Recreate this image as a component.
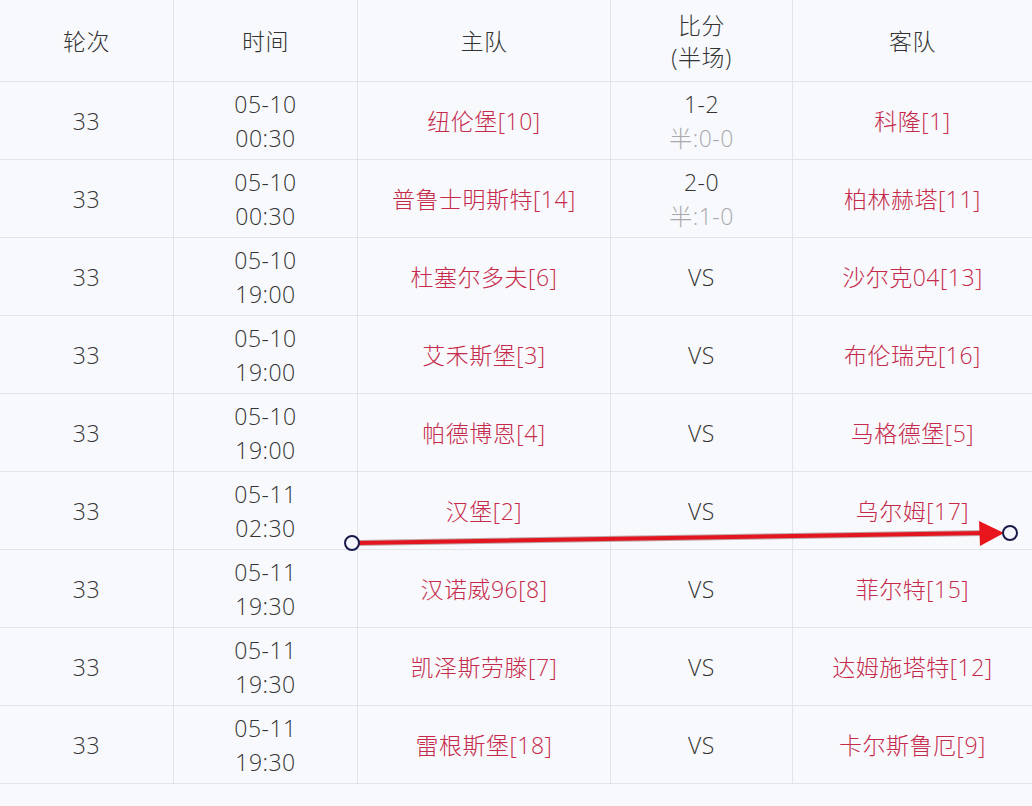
import React from 'react';

const rows = [
  { date: '05-10', time: '00:30', home: '纽伦堡[10]', score: '1-2', half: '半:0-0', away: '科隆[1]' },
  { date: '05-10', time: '00:30', home: '普鲁士明斯特[14]', score: '2-0', half: '半:1-0', away: '柏林赫塔[11]' },
  { date: '05-10', time: '19:00', home: '杜塞尔多夫[6]', score: 'VS', away: '沙尔克04[13]' },
  { date: '05-10', time: '19:00', home: '艾禾斯堡[3]', score: 'VS', away: '布伦瑞克[16]' },
  { date: '05-10', time: '19:00', home: '帕德博恩[4]', score: 'VS', away: '马格德堡[5]' },
  { date: '05-11', time: '02:30', home: '汉堡[2]', score: 'VS', away: '乌尔姆[17]' },
  { date: '05-11', time: '19:30', home: '汉诺威96[8]', score: 'VS', away: '菲尔特[15]' },
  { date: '05-11', time: '19:30', home: '凯泽斯劳滕[7]', score: 'VS', away: '达姆施塔特[12]' },
  { date: '05-11', time: '19:30', home: '雷根斯堡[18]', score: 'VS', away: '卡尔斯鲁厄[9]' },
];

const cols = 'grid grid-cols-[174px_184px_253px_182px_239px]';
const cell = 'flex flex-col items-center justify-center border-r border-b border-[#e3e4ea] last:border-r-0';

export default function App() {
  return (
    <div className="relative w-[1032px] h-[806px] bg-[#f8f9fc] text-[23px] tracking-[0.5px] leading-[34px] font-light text-[#333] font-['Open_Sans','Noto_Sans_CJK_SC',sans-serif] overflow-hidden">
      <div className={`${cols} h-[82px]`}>
        <div className={cell}>轮次</div>
        <div className={cell}>时间</div>
        <div className={cell}>主队</div>
        <div className={`${cell} leading-[32px]`}>
          <span>比分</span>
          <span>(半场)</span>
        </div>
        <div className={cell}>客队</div>
      </div>
      {rows.map((r, i) => (
        <div key={i} className={`${cols} h-[78px]`}>
          <div className={cell}>33</div>
          <div className={cell}>
            <span>{r.date}</span>
            <span>{r.time}</span>
          </div>
          <div className={`${cell} text-[#c52a4b]`}>{r.home}</div>
          <div className={cell}>
            <span>{r.score}</span>
            {r.half && <span className="text-[#a9a9ad]">{r.half}</span>}
          </div>
          <div className={`${cell} text-[#c52a4b]`}>{r.away}</div>
        </div>
      ))}

      {/* red arrow annotation */}
      <svg className="absolute inset-0 pointer-events-none" width="1032" height="806">
        <line x1="358" y1="543" x2="984" y2="533" stroke="#5a0a10" strokeWidth="6" strokeLinecap="round" opacity="0.35" />
        <line x1="358" y1="543" x2="984" y2="533" stroke="#e3161f" strokeWidth="4" />
        <polygon points="979,521 1004,533 980,546" fill="#e8161c" />
        <circle cx="352" cy="543" r="7" fill="#f6f6ff" stroke="#1a1a4a" strokeWidth="2" />
        <circle cx="1010" cy="533" r="7" fill="#f6f6ff" stroke="#1a1a4a" strokeWidth="2" />
      </svg>
    </div>
  );
}
